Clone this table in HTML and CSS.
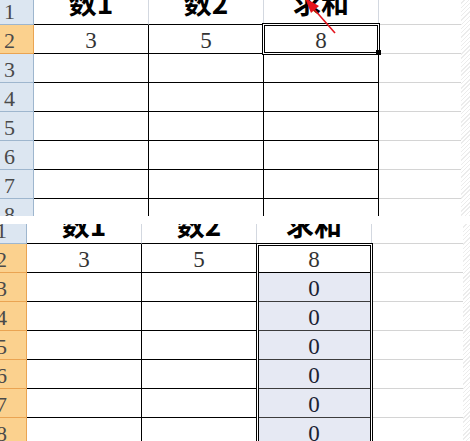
FILE: index.html
```html
<!DOCTYPE html>
<html lang="zh">
<head>
<meta charset="utf-8">
<title>求和</title>
<link rel="stylesheet" href="styles.css">
</head>
<body>
<div class="panel panel-top">
  <div class="sheet sheet-top">
    <div class="rh">1</div><div class="hd">数1</div><div class="hd">数2</div><div class="hd">求和</div><div class="x"></div>
    <div class="rh rh-on">2</div><div class="c">3</div><div class="c">5</div><div class="c">8</div><div class="x"></div>
    <div class="rh">3</div><div class="c"></div><div class="c"></div><div class="c"></div><div class="x"></div>
    <div class="rh">4</div><div class="c"></div><div class="c"></div><div class="c"></div><div class="x"></div>
    <div class="rh">5</div><div class="c"></div><div class="c"></div><div class="c"></div><div class="x"></div>
    <div class="rh">6</div><div class="c"></div><div class="c"></div><div class="c"></div><div class="x"></div>
    <div class="rh">7</div><div class="c"></div><div class="c"></div><div class="c"></div><div class="x"></div>
    <div class="rh">8</div><div class="c"></div><div class="c"></div><div class="c"></div><div class="x"></div>
  </div>
  <div class="hatch"></div>
  <div class="sel-cell"></div>
  <div class="fill-handle"></div>
  <svg class="arrow" width="470" height="216" viewBox="0 0 470 216">
    <line x1="335" y1="33" x2="313" y2="8" stroke="#e3141d" stroke-width="1.6"/>
    <polygon points="305,-2 319,6 311,13" fill="#e3141d"/>
  </svg>
</div>
<div class="gap"></div>
<div class="panel panel-bottom">
  <div class="sheet sheet-bottom">
    <div class="rh">1</div><div class="hd">数1</div><div class="hd">数2</div><div class="hd">求和</div><div class="x"></div>
    <div class="rh rh-on">2</div><div class="c">3</div><div class="c">5</div><div class="c">8</div><div class="x"></div>
    <div class="rh rh-on">3</div><div class="c"></div><div class="c"></div><div class="c r">0</div><div class="x"></div>
    <div class="rh rh-on">4</div><div class="c"></div><div class="c"></div><div class="c r">0</div><div class="x"></div>
    <div class="rh rh-on">5</div><div class="c"></div><div class="c"></div><div class="c r">0</div><div class="x"></div>
    <div class="rh rh-on">6</div><div class="c"></div><div class="c"></div><div class="c r">0</div><div class="x"></div>
    <div class="rh rh-on">7</div><div class="c"></div><div class="c"></div><div class="c r">0</div><div class="x"></div>
    <div class="rh rh-on">8</div><div class="c"></div><div class="c"></div><div class="c r">0</div><div class="x"></div>
  </div>
  <div class="hatch"></div>
  <div class="sel-range"></div>
</div>
</body>
</html>
```
FILE: styles.css
```css
* { box-sizing: border-box; }
html, body { margin: 0; padding: 0; background: #fff; }
body { width: 470px; height: 441px; overflow: hidden; }

.panel {
  position: relative;
  display: flex;
  overflow: hidden;
  background: #fff;
}
.panel-top { height: 216px; }
.gap { height: 8px; }
.panel-bottom { height: 217px; }

.sheet {
  display: grid;
  grid-auto-rows: 29px;
  flex: none;
}
.sheet-top {
  grid-template-columns: 34px 115px 115px 115px 82px;
  margin-top: -4px;
}
.sheet-bottom {
  grid-template-columns: 27px 115px 115px 115px 91px;
  margin-top: -9px;
}

.hatch {
  flex: 1;
  background: repeating-linear-gradient(135deg, #ffffff 0 2px, #ececec 2px 3px);
}

.rh {
  background: #dce6f1;
  border-right: 1px solid #9eb6ce;
  border-bottom: 1px solid #9eb6ce;
  font-family: "Liberation Serif", serif;
  font-size: 22px;
  color: #4a4a4a;
  display: flex;
  align-items: center;
  padding-top: 3px;
}
.sheet-top .rh { padding-left: 4px; }
.sheet-bottom .rh { padding-left: 0; text-indent: -4px; }
.rh-on {
  background: #fbd18e;
  border-right-color: #eaa452;
  border-bottom-color: #eaa452;
}

.hd {
  border-right: 1px solid #d3d8e0;
  border-bottom: 1px solid #000;
  font-family: "Noto Sans CJK SC", "Noto Sans", sans-serif;
  font-weight: 700;
  font-size: 28px;
  line-height: 12px;
  color: #000;
  display: flex;
  justify-content: center;
  align-items: flex-start;
}
.sheet-bottom .hd { padding-top: 3px; }

.c {
  border-right: 1px solid #000;
  border-bottom: 1px solid #000;
  font-family: "Liberation Serif", serif;
  font-size: 23px;
  color: #333;
  display: flex;
  justify-content: center;
  align-items: center;
  padding-top: 3px;
}
.c.r {
  background: #e6e9f3;
  border-bottom-color: #3c3c3c;
  color: #1b2233;
}

.x {
  border-bottom: 1px solid #d4d4d4;
}

.sel-cell {
  position: absolute;
  left: 262px;
  top: 23px;
  width: 118px;
  height: 32px;
  border: 1px solid #000;
  box-shadow: inset 0 0 0 1px #fff, inset 0 0 0 2px #000;
}
.fill-handle {
  position: absolute;
  left: 376px;
  top: 50px;
  width: 5px;
  height: 5px;
  background: #000;
}
.sel-range {
  position: absolute;
  left: 256px;
  top: 19px;
  width: 117px;
  height: 210px;
  border: 1px solid #000;
  box-shadow: inset 0 0 0 1px #fff, inset 0 0 0 2px #000;
}
.arrow {
  position: absolute;
  left: 0;
  top: 0;
  pointer-events: none;
}
```
